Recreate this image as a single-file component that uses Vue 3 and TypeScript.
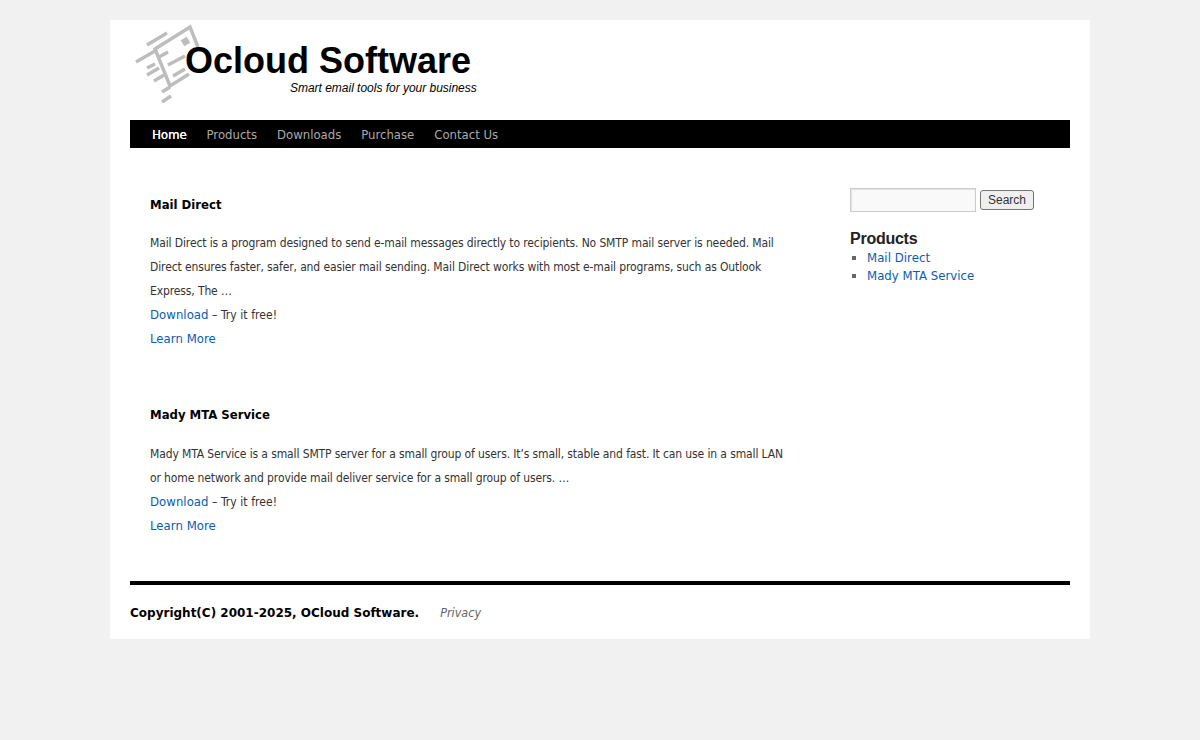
<script setup lang="ts">
interface Product {
  id: string;
  title: string;
  lines: string[];
}

const navItems = ['Home', 'Products', 'Downloads', 'Purchase', 'Contact Us'];

const products: Product[] = [
  {
    id: 'mail-direct',
    title: 'Mail Direct',
    lines: [
      'Mail Direct is a program designed to send e-mail messages directly to recipients. No SMTP mail server is needed. Mail',
      'Direct ensures faster, safer, and easier mail sending. Mail Direct works with most e-mail programs, such as Outlook',
      'Express, The …',
    ],
  },
  {
    id: 'mady-mta',
    title: 'Mady MTA Service',
    lines: [
      'Mady MTA Service is a small SMTP server for a small group of users. It’s small, stable and fast. It can use in a small LAN',
      'or home network and provide mail deliver service for a small group of users. …',
    ],
  },
];
</script>

<template>
  <div class="wrapper">
    <header class="header">
      <div class="logo">
        <svg class="logo-mark" viewBox="0 0 90 90" width="90" height="90" aria-hidden="true">
          <g fill="none" stroke="#bdbdbd" stroke-width="3.5">
            <!-- envelope, its lower right part sits behind the O -->
            <path d="M68 27 L60 7 L25 29 L40 66 L59 54" />
            <path d="M17 25 L37 13" />
            <path d="M6 42 L25 31" />
            <path d="M17 48 L25 44" />
            <path d="M17 55 L29 48" />
            <path d="M24 61 L34 55" />
            <path d="M32 72 L40 67" />
            <path d="M32 82 L41 76" />
            <path d="M29 37 L38 32" />
            <path d="M38 45 L55 36" />
            <path d="M43 56 L55 49" />
          </g>
          <rect x="52" y="18" width="7" height="7" fill="#bdbdbd" transform="rotate(-30 55.5 21.5)" />
        </svg>
        <div class="logo-name">Ocloud Software</div>
        <div class="logo-tag">Smart email tools for your business</div>
      </div>
    </header>

    <nav class="nav">
      <a v-for="(item, i) in navItems" :key="item" class="nav-link" :class="{ active: i === 0 }">{{ item }}</a>
    </nav>

    <div class="main">
      <section class="content">
        <article v-for="p in products" :key="p.id" class="post">
          <h2 class="post-title">{{ p.title }}</h2>
          <p class="post-text">
            <span v-for="line in p.lines" :key="line" class="line desc">{{ line }}</span>
            <span class="line"><a class="link">Download</a> – Try it free!</span>
            <span class="line"><a class="link">Learn More</a></span>
          </p>
        </article>
      </section>

      <aside class="sidebar">
        <form class="search" @submit.prevent>
          <input class="search-input" type="text" />
          <button class="search-btn" type="submit">Search</button>
        </form>
        <h3 class="widget-title">Products</h3>
        <ul class="widget-list">
          <li v-for="p in products" :key="p.id"><a class="link">{{ p.title }}</a></li>
        </ul>
      </aside>
    </div>

    <footer class="footer">
      <span class="copyright">Copyright(C) 2001-2025, OCloud Software.</span>
      <span class="privacy">Privacy</span>
    </footer>
  </div>
</template>

<style>
html,
body {
  margin: 0;
  background: #f1f1f1;
}
</style>

<style scoped>
.wrapper {
  width: 940px;
  margin: 20px auto 0;
  padding: 0 20px;
  background: #fff;
  font-family: "DejaVu Sans Condensed", "DejaVu Sans", sans-serif;
  font-stretch: condensed;
  color: #333;
}

.header {
  height: 100px;
}

.logo {
  position: relative;
  height: 100px;
  padding-left: 55px;
  font-family: "Liberation Sans", Arial, sans-serif;
  font-stretch: normal;
  color: #000;
}

.logo-mark {
  position: absolute;
  left: 0;
  top: 0;
}

.logo-name {
  position: relative;
  padding-top: 20px;
  font-size: 36px;
  line-height: 42px;
  font-weight: 700;
}

.logo-tag {
  position: relative;
  margin-top: -1px;
  padding-left: 105px;
  font-size: 12px;
  line-height: 14px;
  font-style: italic;
  letter-spacing: -0.02px;
}

.nav {
  display: flex;
  height: 28px;
  padding-left: 12px;
  background: #000;
}

.nav-link {
  padding: 0 10px;
  font-size: 13px;
  line-height: 29px;
  color: #aaa;
}

.nav-link.active {
  color: #fff;
  text-shadow: 0.3px 0 0 #fff;
}

.main {
  display: flex;
  padding-top: 40px;
}

.content {
  width: 720px;
  padding-left: 20px;
  box-sizing: border-box;
  flex-shrink: 0;
}

.post {
  margin-bottom: 47px;
}

.post:last-child {
  margin-bottom: 0;
}

.post-title {
  margin: 0 0 9px;
  font-size: 13px;
  line-height: 34px;
  font-weight: 700;
  color: #000;
}

.post + .post .post-title {
  margin-bottom: 10px;
}

.post-text {
  margin: 0;
  font-size: 12px;
  line-height: 24px;
}

.line {
  display: block;
  white-space: nowrap;
  letter-spacing: 0.06px;
}

.line.desc {
  letter-spacing: -0.12px;
}

.link {
  color: #0b5cad;
  font-size: 13px;
  letter-spacing: 0.05px;
}

.sidebar {
  padding-left: 0;
  flex: 1;
}

.search {
  display: flex;
  align-items: center;
  gap: 4px;
  height: 24px;
}

.search-input {
  box-sizing: border-box;
  width: 126px;
  height: 24px;
  border: 1px solid #ccc;
  background: #f9f9f9;
  box-shadow: inset 1px 1px 1px rgba(0, 0, 0, 0.1);
}

.search-btn {
  box-sizing: border-box;
  width: 54px;
  height: 20px;
  padding: 0;
  border: 1px solid #767676;
  border-radius: 3px;
  background: #efefef;
  font-family: "Liberation Sans", Arial, sans-serif;
  font-size: 12px;
  font-stretch: normal;
  color: #333;
}

.widget-title {
  margin: 17px 0 0;
  font-family: "Liberation Sans", Arial, sans-serif;
  font-size: 16px;
  font-stretch: normal;
  line-height: 20px;
  font-weight: 700;
  letter-spacing: -0.25px;
  color: #222;
}

.widget-list {
  margin: 0;
  padding: 0 0 0 17px;
  list-style: square;
  font-size: 13px;
  line-height: 18px;
  color: #666;
}

.footer {
  display: flex;
  gap: 21px;
  height: 54px;
  margin-top: 43px;
  border-top: 4px solid #000;
  font-size: 13px;
  line-height: 56px;
}

.copyright {
  font-family: "DejaVu Sans", sans-serif;
  font-size: 12px;
  font-stretch: normal;
  font-weight: 700;
  color: #000;
}

.privacy {
  font-size: 12.5px;
  font-style: italic;
  color: #666;
}
</style>
